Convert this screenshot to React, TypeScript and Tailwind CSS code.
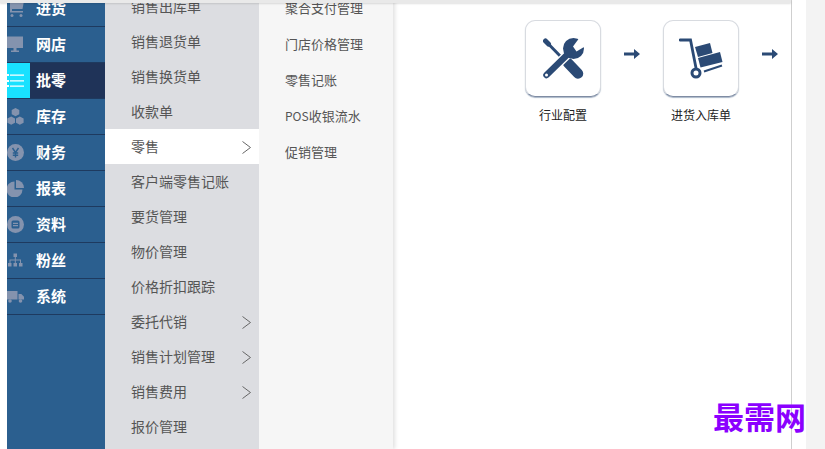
import type { ReactNode } from 'react'

const FONT = "font-['Noto_Sans_CJK_SC','Noto_Sans',sans-serif]"

// ─── Icons ────────────────────────────────────────────────────────────────────

const sideIcons: Record<string, ReactNode> = {
  cart: (
    <svg viewBox="0 0 17 17" className="h-[17px] w-[17px]" fill="#8493ae">
      <path d="M3 1h14l-1.500 8H5v2h11v1.500H3z" />
      <circle cx="5" cy="15.500" r="1.500" />
      <circle cx="14" cy="15.500" r="1.500" />
    </svg>
  ),
  monitor: (
    <svg viewBox="0 0 17 17" className="h-[17px] w-[17px]" fill="#8493ae">
      <path d="M0 0.500h16v11.500H0zM6.500 12h3v2.500H12V16H4v-1.500h2.500z" />
    </svg>
  ),
  list: (
    <svg viewBox="0 0 23 20" className="h-5 w-[23px]" fill="#fff">
      <path d="M0 3h2v2H0zM0 9h2v2H0zM0 14h2v2H0zM3 3.500h14v1.300H3zM3 9.300h14v1.300H3zM3 14.500h14v1.300H3z" />
    </svg>
  ),
  boxes: (
    <svg viewBox="0 0 17 17" className="h-[17px] w-[17px]" fill="#8493ae">
      <path d="M8.500 0l3.800 2v4.200L8.500 8.300 4.700 6.200V2zM4.200 8.400L8 10.400v4.300L4.200 16.800.4 14.700v-4.300zM12.800 8.400l3.800 2v4.300l-3.800 2.100L9 14.700v-4.300z" />
    </svg>
  ),
  yen: (
    <svg viewBox="0 0 17 17" className="h-[17px] w-[17px]">
      <circle cx="8.500" cy="8.500" r="8.500" fill="#8493ae" />
      <path d="M5.500 4l3 4.500 3-4.500M8.500 8.500v5M5.800 9h5.400M5.800 11.200h5.400" stroke="#2b5f8f" strokeWidth="1.400" fill="none" />
    </svg>
  ),
  pie: (
    <svg viewBox="0 0 17 17" className="h-[17px] w-[17px]" fill="#8493ae">
      <path d="M7.500 1.500v8h8a8 8 0 1 1-8-8z" />
      <path d="M9 0a8 8 0 0 1 8 8H9z" />
    </svg>
  ),
  doc: (
    <svg viewBox="0 0 17 17" className="h-[17px] w-[17px]">
      <circle cx="8.500" cy="8.500" r="8.500" fill="#8493ae" />
      <rect x="4.500" y="4.500" width="8" height="8" rx="1.500" fill="#2b5f8f" />
      <path d="M6 7.300h5M6 9.700h5" stroke="#8493ae" strokeWidth="1.200" />
    </svg>
  ),
  tree: (
    <svg viewBox="0 0 17 17" className="h-[17px] w-[17px]" fill="#8493ae">
      <path d="M6.500 1.500h3.500V5H6.500zM1 11h3.500v3.500H1zM6.500 11h3.500v3.500H6.500zM12 11h3.500v3.500H12z" />
      <path d="M7.800 5h1v2.500h5.200V11h-1V8.500H8.800V11h-1V8.500H3.500V11h-1V7.500h5.300z" />
    </svg>
  ),
  truck: (
    <svg viewBox="0 0 17 17" className="h-[17px] w-[17px]" fill="#8493ae">
      <path d="M0 3h10.500v8.500H0zM11.500 6h2.800l2.700 2.800v2.700h-5.500z" />
      <circle cx="3" cy="13" r="1.800" />
      <circle cx="13.500" cy="13" r="1.800" />
    </svg>
  ),
}

function ToolsIcon() {
  return (
    <svg viewBox="0 0 41 41" className="h-[41px] w-[41px]" fill="none">
      {/* screwdriver */}
      <path d="M2.500 3L5.500 6" stroke="#2b4a75" strokeWidth="5" strokeLinecap="round" />
      <path d="M4 4.500L22 23" stroke="#2b4a75" strokeWidth="3" />
      <path d="M25 25L35 35.500" stroke="#2b4a75" strokeWidth="10.500" strokeLinecap="round" />
      {/* wrench, with a white halo where it crosses */}
      <path d="M3.500 37L24 17" stroke="#fff" strokeWidth="9" />
      <path d="M3.500 37L26 15" stroke="#2b4a75" strokeWidth="6.500" strokeLinecap="round" />
      <circle cx="30.500" cy="10.500" r="10.500" fill="#2b4a75" />
      <path d="M30 8.500L33.500 13.500L42 8.500L37 -1z" fill="#fff" />
      <circle cx="3.500" cy="37" r="1.500" fill="#fff" />
    </svg>
  )
}

function HandTruckIcon() {
  return (
    <svg viewBox="0 0 44 41" className="h-[41px] w-11">
      <path d="M1 2h10.500L17 30" stroke="#2b4a75" strokeWidth="2.800" strokeLinecap="round" fill="none" />
      <path d="M16 9l15-4 2.500 10L19 19z" fill="#2b4a75" />
      <path d="M19 20l22-6 2.500 10L21.500 29.500z" fill="#2b4a75" />
      <path d="M25 33.500L43 27.500" stroke="#2b4a75" strokeWidth="2" fill="none" />
      <circle cx="17" cy="35" r="4" stroke="#2b4a75" strokeWidth="3" fill="#fff" />
    </svg>
  )
}

function FlowArrow() {
  return (
    <svg viewBox="0 0 16 10" className="h-2.5 w-4" fill="#2b4a75">
      <path d="M0 3.500h10V0l6 5-6 5V6.500H0z" />
    </svg>
  )
}

function MenuChevron() {
  return (
    <svg viewBox="0 0 9 13" className="mt-[3px] h-[13px] w-[9px]" fill="none" stroke="#666" strokeWidth="1">
      <path d="M0.500 0.500L8.500 6.500L0.500 12.500" />
    </svg>
  )
}

// ─── Data ─────────────────────────────────────────────────────────────────────

const sideItems = [
  { label: '进货', icon: 'cart' },
  { label: '网店', icon: 'monitor' },
  { label: '批零', icon: 'list', active: true },
  { label: '库存', icon: 'boxes' },
  { label: '财务', icon: 'yen' },
  { label: '报表', icon: 'pie' },
  { label: '资料', icon: 'doc' },
  { label: '粉丝', icon: 'tree' },
  { label: '系统', icon: 'truck' },
]

const subItems = [
  { label: '销售出库单' },
  { label: '销售退货单' },
  { label: '销售换货单' },
  { label: '收款单' },
  { label: '零售', arrow: true, active: true },
  { label: '客户端零售记账' },
  { label: '要货管理' },
  { label: '物价管理' },
  { label: '价格折扣跟踪' },
  { label: '委托代销', arrow: true },
  { label: '销售计划管理', arrow: true },
  { label: '销售费用', arrow: true },
  { label: '报价管理' },
]

const thirdItems: ReactNode[] = [
  '聚合支付管理',
  '门店价格管理',
  '零售记账',
  <>
    <span className="text-xs">POS</span>收银流水
  </>,
  '促销管理',
]

// ─── Component ────────────────────────────────────────────────────────────────

export default function App() {
  return (
    <div className={`relative flex h-[449px] w-[825px] overflow-hidden bg-white ${FONT}`}>
      {/* top shadow strip */}
      <div className="absolute left-0 top-0 z-20 h-[3px] w-[791px] bg-[#e9e9e9] shadow-[0_1px_2px_rgba(0,0,0,0.12)]" />

      <div className="w-[7px] shrink-0 bg-white" />

      {/* main nav */}
      <ul className="relative z-10 -mt-[10px] h-[459px] w-[98px] shrink-0 bg-[#2b5f8f]">
        {sideItems.map((item) => (
          <li
            key={item.label}
            className={`flex h-9 items-center border-t border-[#1e3a5f] text-[15px] font-bold text-white last:h-[37px] last:border-b ${
              item.active ? 'bg-[#1f3358]' : ''
            }`}
          >
            <span
              className={`flex h-full w-[23px] shrink-0 items-center overflow-hidden ${
                item.active ? 'bg-[#19e1ff]' : ''
              }`}
            >
              {sideIcons[item.icon]}
            </span>
            <span className="ml-1.5">{item.label}</span>
          </li>
        ))}
      </ul>

      {/* second level menu */}
      <ul className="relative z-10 -mt-[11px] h-[460px] w-[154px] shrink-0 bg-[#dcdde1]">
        {subItems.map((item) => (
          <li
            key={item.label}
            className={`flex h-[35px] items-center justify-between pb-0.5 pl-[26px] pr-2 text-sm text-[#555] ${
              item.active ? 'bg-white' : ''
            }`}
          >
            <span>{item.label}</span>
            {item.arrow && <MenuChevron />}
          </li>
        ))}
      </ul>

      {/* third level menu */}
      <ul className="-mt-[10px] h-[459px] w-[134px] shrink-0 bg-[#f6f6f6] pl-[26px] shadow-[2px_0_4px_rgba(0,0,0,0.12)]">
        {thirdItems.map((label, i) => (
          <li key={i} className="flex h-9 items-center text-[13px] text-[#555]">
            {label}
          </li>
        ))}
      </ul>

      {/* flow canvas */}
      <main className="box-content w-[398px] shrink-0 border-r border-[#cfcfcf]">
        <div className="ml-[132px] mt-5 flex items-start">
          <FlowStep label="行业配置" icon={<ToolsIcon />} />
          <div className="mx-[23px] mt-[29px]">
            <FlowArrow />
          </div>
          <FlowStep label="进货入库单" icon={<HandTruckIcon />} />
          <div className="ml-[23px] mt-[29px]">
            <FlowArrow />
          </div>
        </div>
      </main>

      <div className="w-[14px] shrink-0 bg-white" />
      <div className="flex-1 bg-[#f3f3f3]" />

      {/* watermark */}
      <div className="absolute left-[713px] top-[398px] z-30 text-[31px] font-bold leading-9 text-[#8b00ff]">
        最需网
      </div>
    </div>
  )
}

function FlowStep({ label, icon }: { label: string; icon: ReactNode }) {
  return (
    <div className="flex w-[76px] flex-col items-center">
      <div className="flex h-[77px] w-[76px] items-center justify-center rounded-[10px] border border-[#d8dbe0] border-b-[#7f8ca3] bg-white shadow-[0_1px_1px_rgba(43,74,117,0.4)]">
        {icon}
      </div>
      <span className="mt-[10px] whitespace-nowrap text-xs leading-4 text-[#222]">{label}</span>
    </div>
  )
}
